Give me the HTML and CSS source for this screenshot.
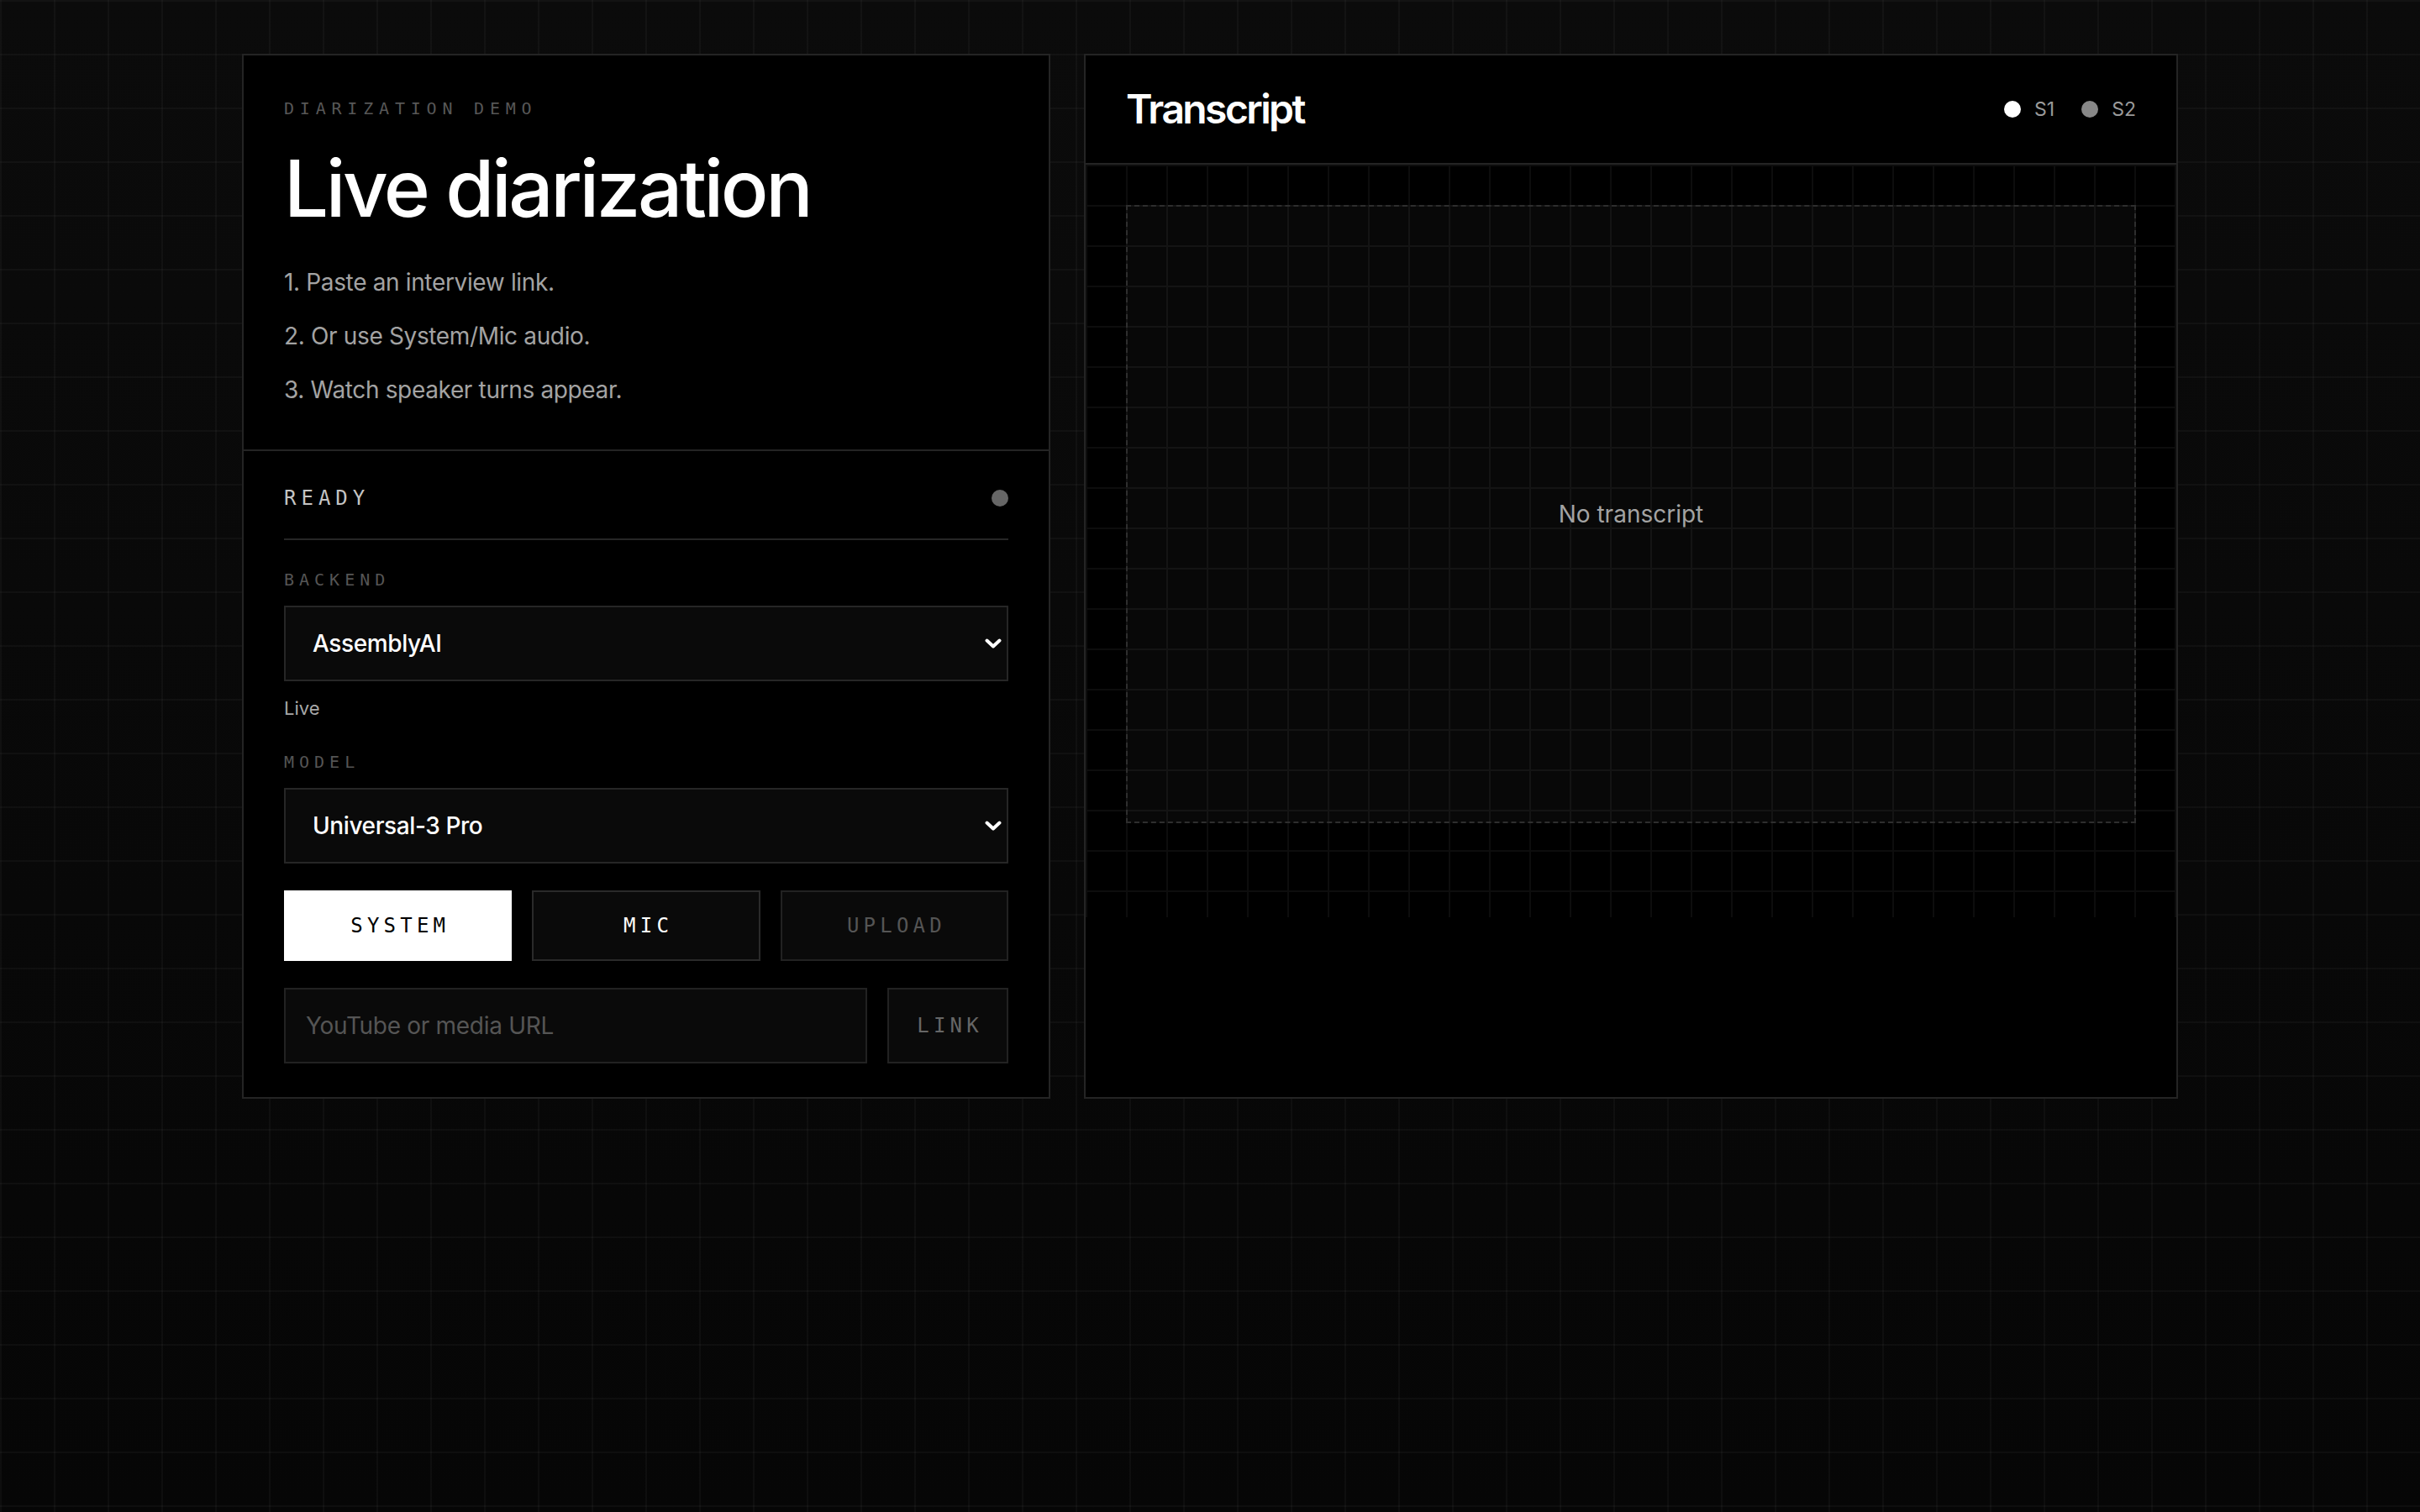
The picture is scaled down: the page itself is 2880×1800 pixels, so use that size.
FILE: index.html
```html
<!DOCTYPE html>
<html lang="en">
<head>
<meta charset="utf-8">
<title>Live diarization</title>
<link rel="stylesheet" href="styles.css">
</head>
<body>
<main class="layout">
  <section class="panel controls">
    <div class="intro">
      <p class="eyebrow">DIARIZATION DEMO</p>
      <h1 class="title">Live diarization</h1>
      <ol class="steps">
        <li>1. Paste an interview link.</li>
        <li>2. Or use System/Mic audio.</li>
        <li>3. Watch speaker turns appear.</li>
      </ol>
    </div>
    <div class="settings">
      <div class="status">
        <span class="status-text">READY</span>
        <span class="status-dot"></span>
      </div>
      <label class="field-label" for="backend">BACKEND</label>
      <div class="select-wrap">
        <select class="select" id="backend"><option>AssemblyAI</option></select>
        <svg class="chevron" viewBox="0 0 20 12" aria-hidden="true"><polyline points="2.5,2.5 10,9.5 17.5,2.5" fill="none" stroke="#fff" stroke-width="4" stroke-linecap="round" stroke-linejoin="round"/></svg>
      </div>
      <p class="hint">Live</p>
      <label class="field-label field-label-spaced" for="model">MODEL</label>
      <div class="select-wrap">
        <select class="select" id="model"><option>Universal-3 Pro</option></select>
        <svg class="chevron" viewBox="0 0 20 12" aria-hidden="true"><polyline points="2.5,2.5 10,9.5 17.5,2.5" fill="none" stroke="#fff" stroke-width="4" stroke-linecap="round" stroke-linejoin="round"/></svg>
      </div>
      <div class="sources">
        <button class="btn btn-active">SYSTEM</button>
        <button class="btn">MIC</button>
        <button class="btn btn-muted">UPLOAD</button>
      </div>
      <div class="link-row">
        <input class="url" type="text" placeholder="YouTube or media URL">
        <button class="btn btn-muted btn-link">LINK</button>
      </div>
    </div>
  </section>
  <section class="panel transcript">
    <header class="transcript-head">
      <h2 class="transcript-title">Transcript</h2>
      <div class="legend">
        <span class="legend-item"><span class="legend-dot legend-dot-s1"></span>S1</span>
        <span class="legend-item"><span class="legend-dot legend-dot-s2"></span>S2</span>
      </div>
    </header>
    <div class="transcript-body">
      <div class="empty">No transcript</div>
    </div>
  </section>
</main>
</body>
</html>
```

FILE: styles.css
```css
* {
  box-sizing: border-box;
}

html,
body {
  margin: 0;
  padding: 0;
  min-height: 100%;
}

body {
  min-height: 1800px;
  background-color: #090909;
  background-image:
    linear-gradient(to right, rgba(255, 255, 255, 0.03) 2px, transparent 2px),
    linear-gradient(to bottom, rgba(255, 255, 255, 0.03) 2px, transparent 2px),
    linear-gradient(to bottom, #0b0b0b, #060606);
  background-size: 64px 64px, 64px 64px, 100% 100%;
  font-family: Inter, "Noto Sans", sans-serif;
  color: #fff;
}

.layout {
  display: grid;
  grid-template-columns: 962px 1fr;
  gap: 40px;
  width: 2304px;
  margin: 0 auto;
  padding-top: 64px;
  align-items: stretch;
}

.panel {
  background: #000;
  border: 2px solid #242424;
}

/* ---------- left panel ---------- */

.intro {
  padding: 48px 48px 50px;
  border-bottom: 2px solid #242424;
}

.eyebrow {
  margin: 0 0 28px;
  font-family: "DejaVu Sans Mono", "Liberation Mono", monospace;
  font-size: 20px;
  line-height: 30px;
  letter-spacing: 6.8px;
  color: #575757;
}

.title {
  margin: 0;
  font-size: 94px;
  line-height: 105.6px;
  font-weight: 500;
  letter-spacing: -3.4px;
  color: #fff;
}

.steps {
  list-style: none;
  margin: 37px 0 0;
  padding: 0;
  display: flex;
  flex-direction: column;
  gap: 22px;
  font-size: 28px;
  line-height: 42px;
  letter-spacing: -0.35px;
  color: #a3a3a3;
}

.settings {
  padding: 40px 48px 40px;
  display: flex;
  flex-direction: column;
}

.status {
  display: flex;
  align-items: center;
  justify-content: space-between;
  box-sizing: content-box;
  height: 32px;
  padding-bottom: 32px;
  border-bottom: 2px solid #262626;
  margin-bottom: 32px;
}

.status-text {
  font-family: "DejaVu Sans Mono", "Liberation Mono", monospace;
  font-size: 24px;
  line-height: 32px;
  letter-spacing: 6px;
  color: #c4c4c4;
}

.status-dot {
  width: 20px;
  height: 20px;
  border-radius: 50%;
  background: #666;
}

.field-label {
  display: block;
  margin-bottom: 16px;
  font-family: "DejaVu Sans Mono", "Liberation Mono", monospace;
  font-size: 20px;
  line-height: 30px;
  letter-spacing: 6px;
  color: #555;
}

.field-label-spaced {
  margin-top: 32px;
}

.select-wrap {
  position: relative;
}

.select {
  display: block;
  width: 100%;
  height: 90px;
  margin: 0;
  padding: 0 48px 0 32px;
  appearance: none;
  -webkit-appearance: none;
  border: 2px solid #262626;
  border-radius: 0;
  background: #0a0a0a;
  color: #fff;
  font-family: Inter, "Noto Sans", sans-serif;
  font-size: 28px;
  font-weight: 500;
  letter-spacing: -0.4px;
  outline: none;
}

.chevron {
  position: absolute;
  right: 8px;
  top: 50%;
  width: 20px;
  height: 12px;
  margin-top: -6px;
  pointer-events: none;
}

.hint {
  margin: 16px 0 0;
  font-size: 22px;
  line-height: 33px;
  color: #a8a8a8;
}

.sources {
  display: grid;
  grid-template-columns: repeat(3, 1fr);
  gap: 24px;
  margin-top: 32px;
}

.btn {
  height: 84px;
  margin: 0;
  padding: 0;
  border: 2px solid #2a2a2a;
  border-radius: 0;
  background: #0a0a0a;
  color: #fff;
  font-family: "DejaVu Sans Mono", "Liberation Mono", monospace;
  font-size: 24px;
  letter-spacing: 5.2px;
  text-indent: 5.2px;
  cursor: pointer;
}

.btn-active {
  background: #fff;
  border-color: #fff;
  color: #000;
}

.btn-muted {
  color: #555;
  border-color: #222;
}

.link-row {
  display: flex;
  gap: 24px;
  margin-top: 32px;
}

.url {
  flex: 1;
  min-width: 0;
  height: 90px;
  margin: 0;
  padding: 0 24px;
  border: 2px solid #222;
  border-radius: 0;
  background: #0a0a0a;
  color: #fff;
  font-family: Inter, "Noto Sans", sans-serif;
  font-size: 28px;
  letter-spacing: -0.3px;
  outline: none;
}

.url::placeholder {
  color: #555;
}

.btn-link {
  width: 144px;
  height: 90px;
  color: #666;
}

/* ---------- right panel ---------- */

.transcript {
  display: flex;
  flex-direction: column;
}

.transcript-head {
  display: flex;
  align-items: center;
  justify-content: space-between;
  height: 130px;
  padding: 0 48px;
  border-bottom: 2px solid #242424;
}

.transcript-title {
  margin: 0;
  font-size: 48px;
  line-height: 56px;
  font-weight: 600;
  letter-spacing: -2.6px;
  color: #fff;
}

.legend {
  display: flex;
  align-items: center;
  gap: 32px;
}

.legend-item {
  display: flex;
  align-items: center;
  gap: 16px;
  font-size: 23px;
  line-height: 32px;
  color: #9a9a9a;
}

.legend-dot {
  width: 20px;
  height: 20px;
  border-radius: 50%;
}

.legend-dot-s1 {
  background: #fff;
}

.legend-dot-s2 {
  background: #888;
}

.transcript-body {
  height: 896px;
  padding: 48px;
  background-color: #000;
  background-image:
    linear-gradient(to right, #0d0d0d 2px, transparent 2px),
    linear-gradient(to bottom, #0d0d0d 2px, transparent 2px);
  background-size: 48px 48px;
}

.empty {
  display: flex;
  align-items: center;
  justify-content: center;
  height: 736px;
  border: 2px dashed #2e2e2e;
  background: rgba(255, 255, 255, 0.03);
  font-size: 28px;
  color: #a3a3a3;
}
```
